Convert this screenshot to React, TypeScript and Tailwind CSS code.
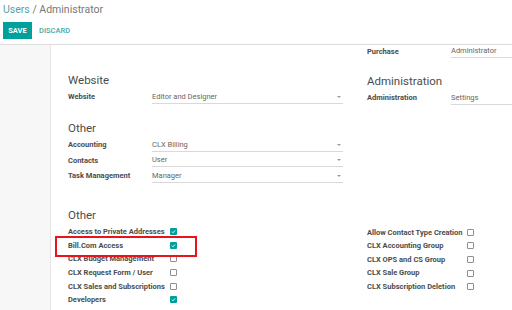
import React from 'react';

const font = { fontFamily: 'Roboto, "Noto Sans", sans-serif' };

function Caret() {
  return (
    <span className="ml-auto mr-[2px] h-0 w-0 border-x-[2px] border-t-[2px] border-x-transparent border-t-[#999]" />
  );
}

function Field({ label, value, select, wide }: { label: string; value: string; select?: boolean; wide?: boolean }) {
  return (
    <div className="mt-[2.5px] flex h-[13px] items-center">
      <div className="w-[84px] text-[7.5px] font-bold text-[#4c4c4c]">{label}</div>
      <div
        className={`flex h-full items-center border-b border-[#d9d9d9] text-[7.5px] text-[#666] ${
          wide ? 'w-[80px]' : 'w-[191px]'
        }`}
      >
        <span>{value}</span>
        {select && <Caret />}
      </div>
    </div>
  );
}

function Check({ on }: { on?: boolean }) {
  return on ? (
    <span className="flex h-[7px] w-[7px] items-center justify-center rounded-[1px] bg-[#00a09d]">
      <svg width="5" height="5" viewBox="0 0 10 10">
        <path d="M2 5.5 L4 7.5 L8 3" stroke="white" strokeWidth="1.8" fill="none" />
      </svg>
    </span>
  ) : (
    <span className="h-[7px] w-[7px] rounded-[1px] border border-[#8f8f8f] bg-white" />
  );
}

function CheckRow({ label, on, w }: { label: string; on?: boolean; w: string }) {
  return (
    <div className="flex h-[13.6px] items-center">
      <div className={`${w} text-[7.5px] font-bold text-[#4c4c4c]`}>{label}</div>
      <Check on={on} />
    </div>
  );
}

function Heading({ children, className = '' }: { children: React.ReactNode; className?: string }) {
  return <div className={`h-[16px] text-[11.5px] leading-[16px] text-[#4c4c4c] ${className}`}>{children}</div>;
}

export default function App() {
  const leftChecks: [string, boolean][] = [
    ['Access to Private Addresses', true],
    ['Bill.Com Access', true],
    ['CLX Budget Management', false],
    ['CLX Request Form / User', false],
    ['CLX Sales and Subscriptions', false],
    ['Developers', true],
  ];
  const rightChecks = [
    'Allow Contact Type Creation',
    'CLX Accounting Group',
    'CLX OPS and CS Group',
    'CLX Sale Group',
    'CLX Subscription Deletion',
  ];

  return (
    <div className="relative h-[310px] w-[512px] overflow-hidden bg-white" style={font}>
      <header className="h-[45px] border-b border-[#dcdcdc] px-[3px]">
        <div className="pt-[3px] text-[10.5px] leading-[14px]">
          <span className="text-[#5a9fa1]">Users</span>
          <span className="text-[#777]"> / Administrator</span>
        </div>
        <div className="mt-[5px] flex items-center">
          <button className="h-[17px] w-[29px] bg-[#00a09d] text-[7.5px] font-bold text-white">SAVE</button>
          <button className="ml-[7px] text-[7.5px] font-medium text-[#4aa6a8]">DISCARD</button>
        </div>
      </header>

      <div className="flex h-[265px]">
        <aside className="w-[51px] shrink-0 border-r border-[#e4e4e4] bg-[#f7f7f7]" />
        <main className="flex flex-1 gap-[24px] overflow-hidden pl-[17px]">
          <section className="w-[275px] shrink-0">
            <div className="h-[11px]" />
            <Heading className="mt-[16px]">Website</Heading>
            <div className="mt-[2.5px]">
              <Field label="Website" value="Editor and Designer" select />
            </div>
            <Heading className="mt-[16.5px]">Other</Heading>
            <div className="mt-[1.5px]">
              <Field label="Accounting" value="CLX Billing" select />
              <Field label="Contacts" value="User" select />
              <Field label="Task Management" value="Manager" select />
            </div>
            <Heading className="mt-[24px]">Other</Heading>
            <div className="mt-[2.5px]">
              {leftChecks.map(([l, on]) => (
                <CheckRow key={l} label={l} on={on} w="w-[102px]" />
              ))}
            </div>
          </section>

          <section className="shrink-0">
            <div className="-mt-[2.5px]">
              <Field label="Purchase" value="Administrator" wide />
            </div>
            <Heading className="mt-[15px]">Administration</Heading>
            <div className="mt-[1.5px]">
              <Field label="Administration" value="Settings" wide />
            </div>
            <div className="h-[121px]" />
            <div>
              {rightChecks.map((l) => (
                <CheckRow key={l} label={l} w="w-[100px]" />
              ))}
            </div>
          </section>
        </main>
      </div>

      <div className="absolute left-[55px] top-[236px] h-[21px] w-[142px] border-2 border-[#e8141b]" />
    </div>
  );
}
